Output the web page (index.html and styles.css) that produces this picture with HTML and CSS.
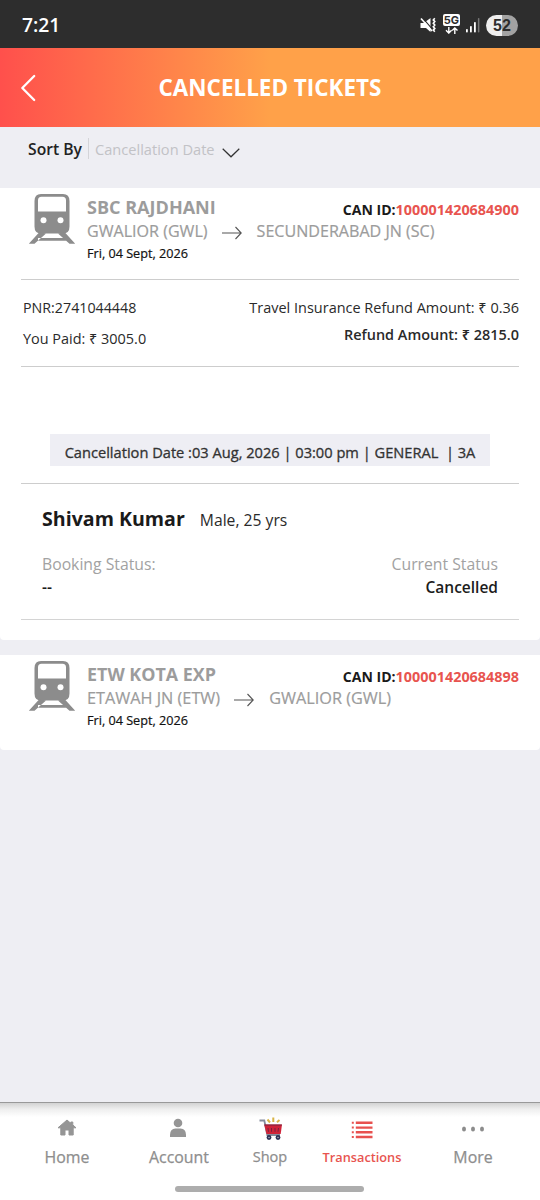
FILE: index.html
```html
<!DOCTYPE html>
<html lang="en">
<head>
<meta charset="utf-8">
<title>Cancelled Tickets</title>
<link rel="stylesheet" href="styles.css">
</head>
<body>
<svg class="defs" width="0" height="0" aria-hidden="true">
  <symbol id="train" viewBox="0 0 48 50">
    <path fill="#8c8c8c" fill-rule="evenodd" d="M13 0h22q6.500 0 6.500 7v25.500q0 7-6.500 7H13q-6.500 0-6.500-7V7q0-7 6.500-7zM13.500 2.800q-3.500 0-3.500 3.500V17.500H38V6.300q0-3.500-3.500-3.500z"/>
    <circle cx="15.500" cy="26.300" r="3" fill="#fff"/><circle cx="32.500" cy="26.300" r="3" fill="#fff"/>
    <path fill="#8c8c8c" d="M11.500 38L.8 49.800H6.500L18 39.500zM36.500 38l10.700 11.800h-5.700L30 39.500zM10 44h28v2.800H10z"/>
  </symbol>
  <symbol id="arrow" viewBox="0 0 20 14">
    <path fill="none" stroke="#555" stroke-width="1.100" d="M0 7h19M13.500 1l5.700 6-5.700 6"/>
  </symbol>
</svg>

<header class="statusbar">
  <span class="clock">7:21</span>
  <div class="status-icons">
    <svg class="mute" width="17" height="16" viewBox="0 0 17 16">
      <path fill="#fff" d="M.5 6h3.300L10.500 1v14L6 11H.5z"/>
      <path stroke="#2d2d2d" stroke-width="1.200" d="M2.500 0.800l10 11.500"/>
      <path stroke="#fff" stroke-width="1.600" d="M1 1.500l11 12.500"/>
      <path fill="none" stroke="#fff" stroke-width="1.600" d="M14.800 1.200l-1.500 1.700 1.500 1.700-1.500 1.700 1.500 1.700-1.500 1.700 1.500 1.700-1.500 1.700 1.500 1.700"/>
    </svg>
    <div class="network">
      <span class="net-label">5G</span>
      <svg width="13" height="7" viewBox="0 0 13 7"><path fill="none" stroke="#fff" stroke-width="1.400" d="M3.800 0v6M1 3.300l2.800 2.800 2.800-2.800M9.800 7V1M7.200 3.600L9.800 1l2.700 2.600"/></svg>
    </div>
    <svg class="signal" width="14" height="15" viewBox="0 0 14 15">
      <g fill="#fff"><rect y="11" width="1.800" height="3.500" rx=".8"/><rect x="4" y="8" width="1.800" height="6.500" rx=".8"/><rect x="8" y="4" width="1.800" height="10.500" rx=".8"/></g>
      <rect x="11.900" y="0" width="1.500" height="14.500" rx=".7" fill="#777"/>
    </svg>
    <span class="battery">52</span>
  </div>
</header>

<div class="titlebar">
  <svg class="back" width="16" height="28" viewBox="0 0 16 28"><path fill="none" stroke="#fff" stroke-width="2.300" stroke-linecap="round" stroke-linejoin="round" d="M14.200 2L2.300 14 14.200 26"/></svg>
  <h1 class="title">CANCELLED TICKETS</h1>
</div>

<div class="sortbar">
  <span class="sort-label">Sort By</span>
  <span class="sort-value">Cancellation Date</span>
  <svg class="chevron" width="18" height="10" viewBox="0 0 18 10"><path fill="none" stroke="#333" stroke-width="1.200" d="M.7.7L9 8.800 17.300.7"/></svg>
</div>

<main class="list">
  <article class="card">
    <div class="ticket-head">
      <svg class="train" width="48" height="50"><use href="#train"/></svg>
      <div class="journey">
        <div class="train-name name-a">SBC RAJDHANI</div>
        <div class="route"><span>GWALIOR (GWL)</span><svg class="arrow" width="20" height="14"><use href="#arrow"/></svg><span>SECUNDERABAD JN (SC)</span></div>
        <div class="date">Fri, 04 Sept, 2026</div>
      </div>
      <div class="can"><span class="can-label">CAN ID:</span><span class="can-id">100001420684900</span></div>
    </div>
    <div class="payment">
      <div class="pay-left"><span class="pnr">PNR:2741044448</span><span>You Paid: ₹ 3005.0</span></div>
      <div class="pay-right"><span class="insurance">Travel Insurance Refund Amount: ₹ 0.36</span><span class="refund">Refund Amount: ₹ 2815.0</span></div>
    </div>
    <div class="chip-row"><div class="chip">Cancellation Date :03 Aug, 2026 | 03:00 pm | GENERAL&nbsp; | 3A</div></div>
    <div class="passenger">
      <div class="person"><span class="person-name">Shivam Kumar</span><span class="person-info">Male, 25 yrs</span></div>
      <div class="statuses">
        <div class="status"><span class="status-label booking">Booking Status:</span><span class="status-value">--</span></div>
        <div class="status status-end"><span class="status-label">Current Status</span><span class="status-value">Cancelled</span></div>
      </div>
    </div>
  </article>

  <article class="card">
    <div class="ticket-head">
      <svg class="train" width="48" height="50"><use href="#train"/></svg>
      <div class="journey">
        <div class="train-name">ETW KOTA EXP</div>
        <div class="route route-b"><span>ETAWAH JN (ETW)</span><svg class="arrow" width="20" height="14"><use href="#arrow"/></svg><span>GWALIOR (GWL)</span></div>
        <div class="date">Fri, 04 Sept, 2026</div>
      </div>
      <div class="can"><span class="can-label">CAN ID:</span><span class="can-id">100001420684898</span></div>
    </div>
  </article>
</main>

<footer class="bottom">
  <nav class="tabs">
    <a class="tab"><span class="tab-icon"><svg width="20" height="18" viewBox="0 0 20 18"><path fill="#959595" stroke="#959595" stroke-linejoin="round" d="M10 1L1 8.800h2.800V16H8v-5h4v5h4.200V8.800H19l-3.200-2.900V3h-2v1.300z"/></svg></span><span class="tab-label">Home</span></a>
    <a class="tab"><span class="tab-icon account"><svg width="18" height="20" viewBox="0 0 18 20"><circle cx="9" cy="5" r="4.300" fill="#959595"/><path fill="#959595" d="M1 19v-2q0-6.500 5.500-6.500h5q5.500 0 5.500 6.500v2z"/></svg></span><span class="tab-label">Account</span></a>
    <a class="tab"><span class="tab-icon cart"><svg width="26" height="24" viewBox="0 0 26 24">
      <path fill="none" stroke="#858c9c" stroke-width="1.800" d="M1.500 3.500H6.300l3 14.500H22"/>
      <path fill="#cf2338" d="M6.200 7.500H24L22.700 17H8.500z"/>
      <path stroke="#6e2440" stroke-width=".9" d="M6.500 8h17.300M10 11l.5 3.800M13.500 11v3.800M17 11v3.800M20.500 11l-.5 3.800"/>
      <path stroke="#d9b548" stroke-width="2" d="M9.500 2.500l2.500 3M15.300.5v4.500M21.500 3L19 5.200"/>
      <circle cx="11" cy="20.500" r="2.400" fill="#2c3155"/><circle cx="20" cy="20.500" r="2.400" fill="#2c3155"/><circle cx="11" cy="20.500" r=".8" fill="#aab"/><circle cx="20" cy="20.500" r=".8" fill="#aab"/>
    </svg></span><span class="tab-label shop">Shop</span></a>
    <a class="tab"><span class="tab-icon transactions"><svg width="22" height="18" viewBox="0 0 22 18"><path stroke="#e8514f" stroke-width="2.400" d="M4.800 1.800H21.500M4.800 6.600H21.500M4.800 11.300H21.500M4.800 16H21.500"/><path stroke="#e8514f" stroke-width="2" d="M.8 1.800h2M.8 6.600h2M.8 11.300h2M.8 16h2"/></svg></span><span class="tab-label active">Transactions</span></a>
    <a class="tab"><span class="tab-icon more"><svg width="22" height="6" viewBox="0 0 22 6"><g fill="#8c8c8c"><ellipse cx="2" cy="3" rx="2" ry="2.500"/><ellipse cx="11" cy="3" rx="2" ry="2.500"/><ellipse cx="20" cy="3" rx="2" ry="2.500"/></g></svg></span><span class="tab-label">More</span></a>
  </nav>
  <div class="handle"></div>
</footer>
</body>
</html>
```

FILE: styles.css
```css
* { box-sizing: border-box; }

body {
  margin: 0;
  width: 540px;
  height: 1200px;
  display: flex;
  flex-direction: column;
  overflow: hidden;
  background: #eeeef3;
  color: #2a2a2a;
  font-family: "Open Sans", "Noto Sans", sans-serif;
  font-size: 14.450px;
  line-height: 20px;
  white-space: nowrap;
}

svg { display: block; flex: none; }
.defs { position: absolute; }

/* Status bar */
.statusbar {
  flex: none;
  height: 48px;
  background: #2d2d2d;
  display: flex;
  justify-content: space-between;
  align-items: center;
  padding: 2px 22px 0 22px;
  color: #fff;
}
.clock { font: 600 19.300px/20px "Open Sans", sans-serif; }
.status-icons { display: flex; align-items: center; }
.mute { margin-right: 6px; }
.network { width: 17px; display: flex; flex-direction: column; align-items: center; gap: 1px; margin: -2px 6px 0 0; }
.net-label {
  width: 17px;
  height: 12px;
  border-radius: 2px;
  background: #fff;
  color: #2d2d2d;
  font: 700 11px/12px Inter, sans-serif;
  text-align: center;
}
.signal { margin-right: 6px; }
.battery {
  width: 32px;
  height: 21px;
  border-radius: 11px;
  background: linear-gradient(90deg, #eee 50%, #a2a2a2 50%);
  color: #2d2d2d;
  font: 700 16px/21px "Liberation Sans", sans-serif;
  text-align: center;
}

/* Title bar */
.titlebar {
  flex: none;
  height: 79px;
  display: flex;
  align-items: center;
  padding: 0 20px;
  background: linear-gradient(90deg, #ff504c 0%, #ffa149 50%);
}
.back { margin-right: -16px; }
.title {
  flex: 1;
  margin: 0;
  color: #fff;
  font-size: 22.460px;
  font-weight: 700;
  line-height: 30px;
  text-align: center;
}

/* Sort bar */
.sortbar {
  flex: none;
  height: 61px;
  display: flex;
  align-items: flex-start;
  padding: 11px 28px 0;
}
.sort-label { padding: 1px 6px 0 0; font-size: 15.690px; font-weight: 600; color: #222; }
.sort-value { border-left: 1px solid #d4d4d8; padding-left: 6px; padding-top: 1px; height: 21px; font-size: 14.620px; color: #c2c2c6; }
.chevron { margin: 10px 0 0 7px; }

/* Cards */
.list { flex: 1; display: flex; flex-direction: column; gap: 15px; }
.card { background: #fff; border-radius: 0 0 4px 4px; padding: 0 21px; }
.ticket-head { display: flex; height: 91px; padding-top: 6px; }
.card + .card .ticket-head { height: 95px; }
.train { margin-left: 7px; }
.journey { padding: 3px 0 0 11px; }
.train-name { font-size: 17.900px; font-weight: 700; color: #9c9c9c; }
.name-a { font-size: 18.050px; }
.route { display: flex; margin-top: 4px; font-size: 16.080px; color: #9c9c9c; -webkit-text-stroke: .2px #9c9c9c; }
.route-b { font-size: 16.250px; }
.arrow { margin: 5px 15px 0 14px; }
.date { margin-top: 2px; font-size: 12.650px; color: #111; -webkit-text-stroke: .2px #111; }
.can { width: 0; flex: 1; display: flex; justify-content: flex-end; padding-top: 6px; font-weight: 700; font-size: 14.400px; }
.can-label { font-size: 14.050px; color: #1a1a1a; }
.can-id { color: #e8544f; }

.payment {
  display: flex;
  justify-content: space-between;
  height: 88px;
  padding: 18px 0 0 2px;
  border-top: 1px solid #cdcdcd;
  border-bottom: 1px solid #cdcdcd;
}
.pay-left, .pay-right { display: flex; flex-direction: column; }
.pay-left { gap: 11px; }
.pnr { font-size: 14.260px; }
.pay-right { gap: 7px; align-items: flex-end; }
.insurance { font-size: 14.480px; }
.refund { font-weight: 600; }

.chip-row { height: 116px; padding: 67px 0 0 29px; }
.chip { width: 440px; height: 32px; padding-top: 8px; background: #eeeef4; font-size: 14.640px; color: #333; -webkit-text-stroke: .3px #333; text-align: center; }

.passenger {
  height: 137px;
  padding: 25px 21px 0;
  border-top: 1px solid #cdcdcd;
  border-bottom: 1px solid #d4d4d4;
  margin-bottom: 20px;
}
.person { display: flex; align-items: baseline; gap: 15px; }
.person-name { font-size: 19.600px; font-weight: 700; color: #1a1a1a; }
.person-info { font-size: 15.700px; }
.statuses { display: flex; justify-content: space-between; margin-top: 24px; }
.status { display: flex; flex-direction: column; gap: 3px; font-size: 15.750px; }
.status-end { align-items: flex-end; }
.status-label { color: #a2a2a2; }
.status-value { font-size: 15.500px; font-weight: 600; color: #1c1c1c; }

/* Bottom navigation */
.bottom {
  flex: none;
  height: 98px;
  border-top: 1px solid #999;
  background: linear-gradient(#d3d3d3 0, #eee 6px, #fff 14px);
}
.tabs { display: grid; grid-template-columns: 112px 112px 70px 114px 108px; padding-left: 11px; height: 83px; }
.tab { display: flex; flex-direction: column; align-items: center; }
.tab-icon { height: 44px; padding-top: 16px; }
.account { padding: 15px 2px 0 0; }
.cart { padding: 14px 0 0 1px; }
.transactions { padding-top: 18px; }
.more { padding-top: 23px; }
.tab-label { font-size: 15.900px; color: #8e8e8e; -webkit-text-stroke: .25px #8e8e8e; }
.shop { font-size: 14.500px; }
.active { font-size: 12.750px; font-weight: 600; color: #e8544f; -webkit-text-stroke: 0; }
.handle { width: 189px; height: 6px; margin-left: 175px; border-radius: 3px; background: #adadad; }
```
